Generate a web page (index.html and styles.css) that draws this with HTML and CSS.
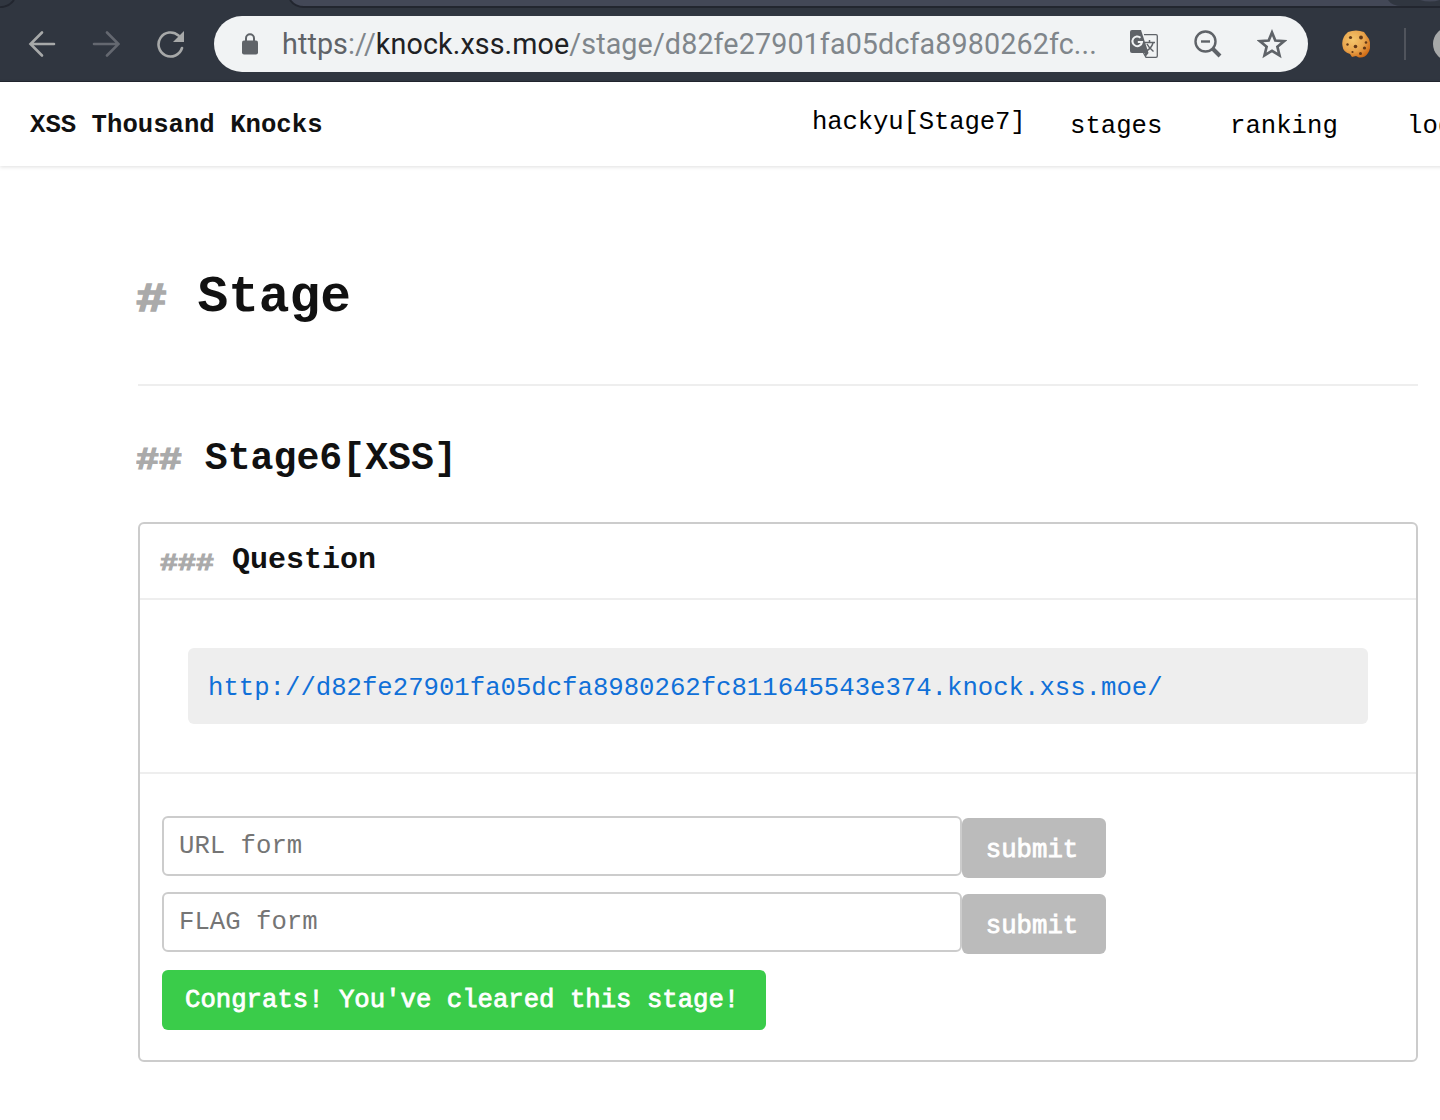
FILE: index.html
```html
<!DOCTYPE html>
<html lang="en">
<head>
<meta charset="utf-8">
<title>XSS Thousand Knocks</title>
<link rel="stylesheet" href="styles.css">
</head>
<body>
<div class="browser">
  <svg class="tabs" width="1440" height="8" viewBox="0 0 1440 8">
    <path d="M290 0Q295 7 304 7H1388Q1396 7 1402 12H1440V0Z" fill="#434857"/>
    <path d="M0 7.200Q9 7 14 0M290 0Q295 7 304 7H1440" fill="none" stroke="#22262f" stroke-width="2"/>
    <path d="M1388 0Q1392 6 1402 6H1440V0Z" fill="#303640"/>
    <path d="M1420 0Q1430 3 1440 0Z" fill="#434857"/>
  </svg>
  <div class="toolbar">
    <svg class="icon back" viewBox="0 0 28 28"><path d="M26 14H3M14 2.500L2.500 14L14 25.500" /></svg>
    <svg class="icon forward" viewBox="0 0 28 28"><path d="M2 14H26M15 2.500L26.500 14L15 25.500" /></svg>
    <svg class="icon reload" viewBox="0 0 28 28"><path d="M22.500 5.500A12 12 0 1 0 26 18"/><path class="solid" d="M28 1V12H17Z"/></svg>
    <div class="omnibox">
      <svg class="lock" viewBox="0 0 18 22"><rect x="1" y="7.500" width="16" height="14" rx="2"/><path d="M5 8V5.200a4 4 0 0 1 8 0V8"/></svg>
      <div class="address"><span class="scheme">https</span>://<b>knock.xss.moe</b>/stage/d82fe27901fa05dcfa8980262fc...</div>
      <svg class="translate" viewBox="0 0 28 28">
        <path d="M14 4.700H26a1.300 1.300 0 0 1 1.300 1.300V26a1.300 1.300 0 0 1-1.300 1.300H16L13.500 23" fill="none" stroke="#5f6368" stroke-width="1.300"/>
        <path d="M2 0H11L18.500 23H2a2 2 0 0 1-2-2V2a2 2 0 0 1 2-2Z" fill="#5f6368"/>
        <path d="M14.500 23H18.500L15.500 27Z" fill="#5f6368"/>
        <path d="M10.500 7.800A4.800 4.800 0 1 0 12 12H7.800" fill="none" stroke="#f1f3f4" stroke-width="2"/>
        <path d="M15 12.500H25M19.500 10V12.500M23 13Q21.500 18 16.500 21M17 14Q19 18 23.500 21.500" fill="none" stroke="#5f6368" stroke-width="1.500"/>
      </svg>
      <svg class="zoomout" viewBox="0 0 28 28"><circle cx="11.500" cy="11.500" r="10"/><path d="M7 11.500H16"/><path class="handle" d="M18.500 18.500L26 26"/></svg>
      <svg class="star" viewBox="0 0 30 30"><path d="M15 3.500L18.300 11.500L27 12.200L20.400 17.800L22.500 26.300L15 21.800L7.500 26.300L9.600 17.800L3 12.200L11.700 11.500Z"/></svg>
    </div>
    <svg class="cookie" viewBox="0 0 28 28">
      <defs><radialGradient id="dough" cx=".38" cy=".35" r=".7"><stop offset="0" stop-color="#f5c66c"/><stop offset=".6" stop-color="#e8a44c"/><stop offset="1" stop-color="#d26d16"/></radialGradient></defs>
      <path d="M6 2Q14-1 22 2L27 9Q30 17 26 23Q23 28 17 27.500L14 26L10 27L8 24Q1 22 .5 16Q-1 8 6 2Z" fill="url(#dough)"/>
      <g fill="#633817"><circle cx="8.500" cy="7.500" r="1.600"/><circle cx="19" cy="7.500" r="1.900"/><circle cx="5.500" cy="14.500" r="1.200"/><circle cx="13.500" cy="16.500" r="1.800"/><circle cx="24" cy="12.500" r="1.300"/><circle cx="22.500" cy="18" r="1.600"/><circle cx="18.500" cy="23.500" r="1.500"/><circle cx="10.500" cy="22" r="1.100"/></g>
    </svg>
    <div class="divider"></div>
    <div class="avatar"></div>
  </div>
</div>
<header class="site-header">
  <div class="brand">XSS Thousand Knocks</div>
  <nav class="nav"><span class="user">hackyu[Stage7]</span><a class="stages">stages</a><a class="ranking">ranking</a><a class="logout">logout</a></nav>
</header>
<main>
  <h1><span class="hash">#</span> Stage</h1>
  <div class="rule"></div>
  <h2><span class="hash">##</span> Stage6[XSS]</h2>
  <section class="card">
    <h3><span class="hash">###</span> Question</h3>
    <div class="question"><a class="target">http://d82fe27901fa05dcfa8980262fc811645543e374.knock.xss.moe/</a></div>
    <div class="forms">
      <form class="row"><input type="text" placeholder="URL form"><button type="button">submit</button></form>
      <form class="row"><input type="text" placeholder="FLAG form"><button type="button">submit</button></form>
      <div class="congrats">Congrats! You've cleared this stage!</div>
    </div>
  </section>
</main>
</body>
</html>
```
FILE: styles.css
```css
* { box-sizing: border-box; }
body {
  margin: 0;
  height: 1120px;
  overflow: hidden;
  background: #fff;
  color: #111;
  font: 25.660px "Liberation Mono", monospace;
}
svg { display: block; flex: none; }

.browser { height: 82px; background: #303640; border-bottom: 1px solid #22262f; overflow: hidden; }
.toolbar { display: flex; align-items: center; height: 72px; padding-left: 28px; width: 1480px; }
.icon { width: 28px; height: 28px; fill: none; stroke: #a7a9a9; stroke-width: 2.600; stroke-linecap: round; }
.icon .solid { fill: #a7a9a9; stroke: none; }
.forward { margin-left: 36px; stroke: #646870; }
.reload { margin-left: 36px; }
.omnibox {
  display: flex;
  align-items: center;
  width: 1094px;
  height: 56px;
  margin-left: 30px;
  padding-left: 27px;
  border-radius: 28px;
  background: #f1f3f4;
}
.lock { width: 18px; height: 22px; fill: #5f6368; }
.lock path { fill: none; stroke: #5f6368; stroke-width: 2; }
.address {
  width: 848px;
  margin-left: 23px;
  font: 28.700px/56px Roboto, sans-serif;
  letter-spacing: .11px;
  color: #80868b;
  white-space: nowrap;
}
.address b { font-weight: 400; color: #202124; }
.scheme { color: #5f6368; }
.translate { width: 28px; height: 28px; }
.zoomout { width: 28px; height: 28px; margin-left: 36px; fill: none; stroke: #5f6368; stroke-width: 2.400; }
.zoomout .handle { stroke-width: 4; }
.star { width: 30px; height: 30px; margin-left: 35px; fill: none; stroke: #5f6368; stroke-width: 2.700; }
.cookie { width: 28px; height: 28px; margin-left: 34px; }
.divider { width: 2px; height: 32px; margin-left: 34px; background: #50545c; }
.avatar { width: 34px; height: 34px; margin-left: 27px; border-radius: 50%; background: #a7a9a9; }

.site-header {
  display: flex;
  justify-content: space-between;
  width: 1500px;
  height: 84px;
  padding-left: 30px;
  line-height: 84px;
  white-space: nowrap;
  box-shadow: 0 1px 4px rgba(0, 0, 0, .13);
}
.brand { padding-top: 2px; font-weight: 700; }
.nav { display: flex; width: 688px; color: #000; }
.user { width: 258px; line-height: 81px; letter-spacing: -.15px; }
.stages, .ranking, .logout { padding-top: 3px; }
.stages { width: 160px; }
.ranking { width: 177px; }

main { width: 1282px; margin-left: 136px; padding-top: 101px; }
h1, h2, h3 { margin: 0; font-weight: 700; }
h1 { font-size: 51.200px; line-height: 60px; }
h2 { margin-top: 51px; font-size: 38.200px; line-height: 44px; }
.hash {
  display: inline-block;
  color: #aaa;
  transform: scaleY(.8);
  transform-origin: 50% 73%;
  -webkit-text-stroke: .04em #aaa;
}
.rule { height: 2px; margin: 57px 0 0 2px; background: #eee; }
.card { height: 540px; margin: 41px 0 0 2px; border: 2px solid #ccc; border-radius: 6px; }
h3 { height: 76px; padding-left: 20px; border-bottom: 2px solid #eee; font-size: 30px; line-height: 73px; }
.question { height: 174px; padding: 48px; border-bottom: 2px solid #eee; }
.target {
  display: block;
  height: 76px;
  padding: 3px 20px 0;
  border-radius: 6px;
  background: #eee;
  color: #1070d8;
  line-height: 76px;
}
.forms { padding: 42px 22px 0; }
.row { display: flex; height: 60px; margin-bottom: 16px; }
input {
  width: 800px;
  height: 60px;
  padding: 0 15px;
  border: 2px solid #ccc;
  border-radius: 6px;
  background: #fff;
  font: inherit;
}
input::placeholder { color: #757575; }
button {
  width: 144px;
  height: 60px;
  margin-top: 2px;
  padding: 4px 0 0;
  border: 0;
  border-radius: 6px;
  background: #bbb;
  color: #fff;
  font: inherit;
  text-indent: -4px;
  -webkit-text-stroke: .8px #fff;
}
.congrats {
  width: 604px;
  height: 60px;
  margin-top: 18px;
  padding-left: 23px;
  border-radius: 6px;
  background: #3acc4a;
  color: #fff;
  line-height: 61px;
  -webkit-text-stroke: .8px #fff;
}
```
